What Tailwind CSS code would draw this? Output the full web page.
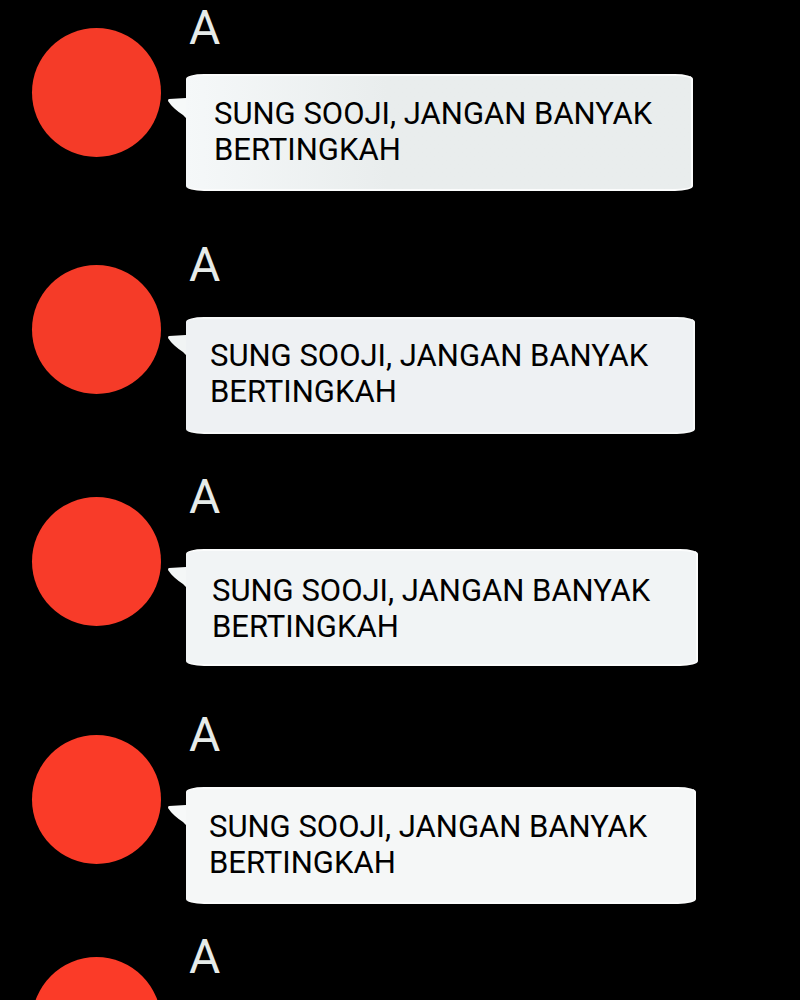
<!DOCTYPE html>
<html lang="id">
<head>
<meta charset="utf-8">
<meta name="viewport" content="width=device-width, initial-scale=1">
<title>Chat</title>
<script src="https://cdn.jsdelivr.net/npm/@tailwindcss/browser@4"></script>
</head>
<body class="bg-black font-[Roboto,sans-serif]">
<main class="flex h-screen flex-col overflow-hidden pl-8">
  <article class="flex shrink-0 items-start pb-[46px]">
    <div class="mt-7 size-[129px] shrink-0 rounded-full bg-[#f53b28]"></div>
    <svg class="mt-[98px] ml-[7px] h-5 w-[18px] shrink-0 overflow-visible" viewBox="0 0 18 20" aria-hidden="true"><path d="M1 1 18 0V20L15 17C9 13 4 9 0 3Q0 1 1 1Z" fill="#f6f9f9"/></svg>
    <div class="min-w-0 flex-1">
      <h2 class="pl-[3px] text-[48px] leading-[56px] text-[#e6ebe9]">A</h2>
      <p class="mt-[18px] min-h-[117px] w-full max-w-[507px] rounded-[18px/5px] border-2 border-l-0 border-[#fbfcfc] bg-linear-to-r from-[#f5f8f9] to-[#e9eded] to-40% pt-5 pl-7 text-[31px] leading-9 text-black">SUNG SOOJI, JANGAN BANYAK<br>BERTINGKAH</p>
    </div>
  </article>
  <article class="flex shrink-0 items-start pb-[35px]">
    <div class="mt-7 size-[129px] shrink-0 rounded-full bg-[#f53b28]"></div>
    <svg class="mt-[98px] ml-[7px] h-5 w-[18px] shrink-0 overflow-visible" viewBox="0 0 18 20" aria-hidden="true"><path d="M1 1 18 0V20L15 17C9 13 4 9 0 3Q0 1 1 1Z" fill="#f1f4f4"/></svg>
    <div class="min-w-0 flex-1">
      <h2 class="pl-[3px] text-[48px] leading-[56px] text-[#e6ebe9]">A</h2>
      <p class="mt-6 min-h-[117px] w-full max-w-[509px] rounded-[18px/5px] border-2 border-l-0 border-[#f7f9f9] bg-[#eef1f3] pt-[19px] pl-6 text-[31px] leading-9 text-black">SUNG SOOJI, JANGAN BANYAK<br>BERTINGKAH</p>
    </div>
  </article>
  <article class="flex shrink-0 items-start pb-[41px]">
    <div class="mt-7 size-[129px] shrink-0 rounded-full bg-[#f83b29]"></div>
    <svg class="mt-[98px] ml-[7px] h-5 w-[18px] shrink-0 overflow-visible" viewBox="0 0 18 20" aria-hidden="true"><path d="M1 1 18 0V20L15 17C9 13 4 9 0 3Q0 1 1 1Z" fill="#f4f7f7"/></svg>
    <div class="min-w-0 flex-1">
      <h2 class="pl-[3px] text-[48px] leading-[56px] text-[#e6ebe9]">A</h2>
      <p class="mt-6 min-h-[117px] w-full max-w-[512px] rounded-[18px/5px] border-2 border-l-0 border-[#fbfcfc] bg-[#f1f4f5] pt-[22px] pl-[26px] text-[31px] leading-9 text-black">SUNG SOOJI, JANGAN BANYAK<br>BERTINGKAH</p>
    </div>
  </article>
  <article class="flex shrink-0 items-start pb-[25px]">
    <div class="mt-7 size-[129px] shrink-0 rounded-full bg-[#fa3b28]"></div>
    <svg class="mt-[98px] ml-[7px] h-5 w-[18px] shrink-0 overflow-visible" viewBox="0 0 18 20" aria-hidden="true"><path d="M1 1 18 0V20L15 17C9 13 4 9 0 3Q0 1 1 1Z" fill="#f7f9f9"/></svg>
    <div class="min-w-0 flex-1">
      <h2 class="pl-[3px] text-[48px] leading-[56px] text-[#e6ebe9]">A</h2>
      <p class="mt-6 min-h-[117px] w-full max-w-[510px] rounded-[18px/5px] border-2 border-l-0 border-[#fbfcfc] bg-[#f5f7f7] pt-5 pl-[23px] text-[31px] leading-9 text-black">SUNG SOOJI, JANGAN BANYAK<br>BERTINGKAH</p>
    </div>
  </article>
  <article class="flex shrink-0 items-start">
    <div class="mt-7 size-[129px] shrink-0 rounded-full bg-[#fb3b28]"></div>
    <h2 class="ml-[25px] pl-[3px] text-[48px] leading-[56px] text-[#e6ebe9]">A</h2>
  </article>
</main>
</body>
</html>
